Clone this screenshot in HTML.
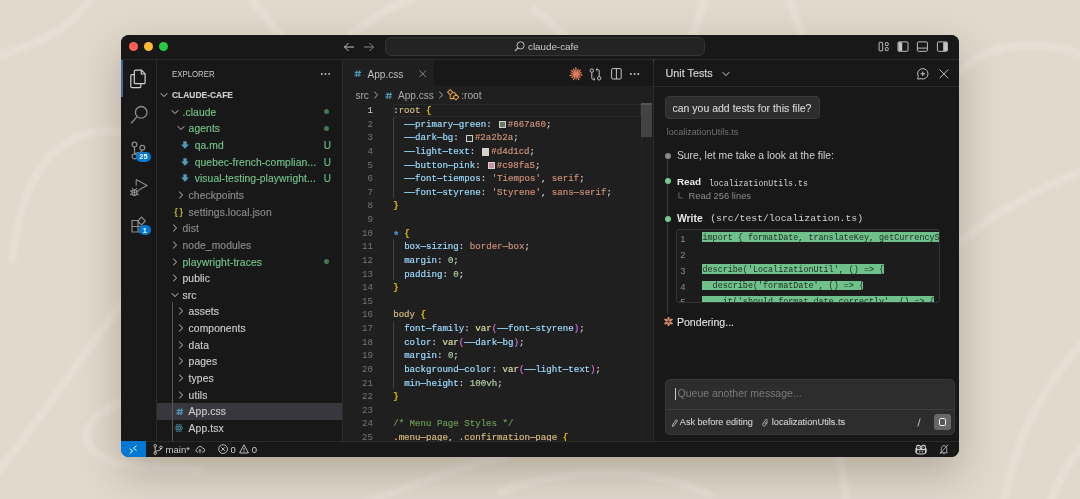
<!DOCTYPE html>
<html><head><meta charset="utf-8">
<style>
*{box-sizing:border-box;margin:0;padding:0}
html,body{width:1080px;height:499px;overflow:hidden}
body{background:#e0d9cc;position:relative;font-family:"Liberation Sans",sans-serif;color:#cccccc}
#win{position:absolute;left:121px;top:34.7px;width:837.8px;height:422.3px;border-radius:8px;background:#181818;overflow:hidden;box-shadow:0 16px 40px rgba(50,35,20,0.26)}
#in{position:absolute;left:-121px;top:-34.7px;width:1080px;height:499px;will-change:transform}
.t{position:absolute;white-space:pre}
.r{position:absolute}
svg{position:absolute;overflow:visible}
</style></head><body>
<svg style="left:0;top:0" width="1080" height="499" viewBox="0 0 1080 499">
<defs><filter id="bl" x="-10%" y="-10%" width="120%" height="120%"><feGaussianBlur stdDeviation="1.6"/></filter></defs>
<g fill="none" stroke="#e6dfd4" stroke-width="8.5" stroke-linecap="round" filter="url(#bl)">
<path d="M-10 58 C 25 48, 70 35, 92 -5"/>
<path d="M12 260 C 20 190, 45 140, 95 132 C 140 126, 200 150, 240 200"/>
<path d="M-5 475 C 40 420, 90 345, 135 285"/>
<path d="M140 398 C 100 405, 72 430, 95 452 C 115 470, 150 466, 200 470"/>
<path d="M250 -5 C 262 15, 275 30, 290 45"/>
<path d="M340 45 C 360 25, 385 8, 420 -5"/>
<path d="M535 10 C 548 20, 560 30, 572 45"/>
<path d="M688 45 C 695 30, 700 15, 706 -5"/>
<path d="M788 -5 C 795 15, 800 30, 806 45"/>
<path d="M962 70 C 975 55, 1000 45, 1030 45 C 1055 45, 1070 50, 1090 58"/>
<path d="M950 250 C 985 220, 1030 190, 1090 168"/>
<path d="M1003 505 C 1015 440, 1045 380, 1090 335"/>
<path d="M1050 505 C 1058 480, 1068 460, 1090 440"/>
<path d="M500 492 C 560 470, 640 462, 710 495"/>
<path d="M838 455 C 842 470, 845 485, 846 505"/>
<path d="M360 505 C 410 485, 460 468, 505 455"/>
</g></svg>
<div id="win"><div id="in"><div class="r" style="left:121px;top:35px;width:838px;height:24px;background:#181818;"></div><div class="r" style="left:128.5px;top:42.0px;width:9.4px;height:9.4px;background:#ff5f57;border-radius:50%"></div><div class="r" style="left:143.70000000000002px;top:42.0px;width:9.4px;height:9.4px;background:#febc2e;border-radius:50%"></div><div class="r" style="left:158.8px;top:42.0px;width:9.4px;height:9.4px;background:#28c840;border-radius:50%"></div><svg style="left:343px;top:42px" width="12" height="10" viewBox="0 0 12 10"><path d="M11 5H1.5M5.5 1L1.5 5l4 4" fill="none" stroke="#cccccc" stroke-width="0.95"/></svg><svg style="left:363px;top:42px" width="12" height="10" viewBox="0 0 12 10"><path d="M1 5h9.5M6.5 1l4 4-4 4" fill="none" stroke="#8a8a8a" stroke-width="0.95"/></svg><div class="r" style="left:385.3px;top:37.3px;width:319.5px;height:18.3px;background:#232323;border:1px solid #353535;border-radius:6px"></div><svg style="left:513.5px;top:41.3px" width="11" height="11" viewBox="0 0 11 11"><circle cx="6.6" cy="4.4" r="3.6" fill="none" stroke="#bdbdbd" stroke-width="1"/><path d="M4 7L0.8 10.2" stroke="#bdbdbd" stroke-width="1.1"/></svg><div class="t" style="left:528px;top:36.8px;height:20px;line-height:20px;font-size:9.8px;color:#cccccc;font-family:'Liberation Sans',sans-serif;font-weight:normal;">claude-cafe</div><svg style="left:878px;top:41px" width="72" height="11" viewBox="0 0 72 11" fill="none" stroke="#c5c5c5" stroke-width="0.95"><rect x="1.1" y="1.3" width="3.6" height="8.6" rx="0.7"/><rect x="7.4" y="1.6" width="2.8" height="3" rx="0.7"/><rect x="7.4" y="6.6" width="2.8" height="3" rx="0.7"/><rect x="20" y="0.9" width="10" height="9.4" rx="1"/><rect x="20.4" y="1.3" width="3.8" height="8.6" fill="#c5c5c5" stroke="none"/><rect x="39.4" y="0.9" width="10" height="9.4" rx="1"/><path d="M39.4 7.1h10"/><rect x="59.4" y="0.9" width="10" height="9.4" rx="1"/><rect x="65.2" y="1.3" width="3.8" height="8.6" fill="#c5c5c5" stroke="none"/></svg><div class="r" style="left:121px;top:59px;width:35px;height:382px;background:#181818;"></div><div class="r" style="left:156px;top:59px;width:1px;height:382px;background:#2b2b2b;"></div><div class="r" style="left:121px;top:60px;width:1.8px;height:37px;background:#3a6c9e;"></div><svg style="left:129px;top:68.5px" width="19" height="20" viewBox="0 0 19 20" fill="none" stroke="#d0d0d0" stroke-width="1.2" stroke-linejoin="round"><path d="M6.5 1.2h6l3.6 3.6v8.6a1.2 1.2 0 0 1-1.2 1.2H6.5a1.2 1.2 0 0 1-1.2-1.2V2.4a1.2 1.2 0 0 1 1.2-1.2z"/><path d="M12.3 1.2v3.8h3.8"/><path d="M5.3 5.6H3a1.2 1.2 0 0 0-1.2 1.2v10.6A1.2 1.2 0 0 0 3 18.6h7.6a1.2 1.2 0 0 0 1.2-1.2v-2.8"/></svg><svg style="left:129.5px;top:104.5px" width="19" height="20" viewBox="0 0 19 20" fill="none" stroke="#8c8c8c" stroke-width="1.3"><circle cx="11.2" cy="7.3" r="5.8"/><path d="M7.1 11.6L1.2 18.3"/></svg><svg style="left:130px;top:141px" width="16" height="19" viewBox="0 0 16 19" fill="none" stroke="#8c8c8c" stroke-width="1.2"><circle cx="4.5" cy="3.6" r="2.4"/><circle cx="12.3" cy="6.8" r="2.4"/><circle cx="4.5" cy="15.4" r="2.4"/><path d="M4.5 6v7M12.3 9.2c0 3-7.8 2.4-7.8 4"/></svg><div class="r" style="left:136.2px;top:151.8px;width:14.6px;height:10.2px;background:#0078d4;border-radius:5.1px"></div><div class="t" style="left:136.2px;top:147.2px;height:20px;line-height:20px;font-size:7.4px;color:#ffffff;font-family:'Liberation Sans',sans-serif;font-weight:bold;width:14.6px;text-align:center">25</div><svg style="left:128.5px;top:178px" width="20" height="20" viewBox="0 0 20 20" fill="none" stroke="#8c8c8c" stroke-width="1.15"><path d="M7.2 1.5v6M7.2 1.5L18 7.5 9.8 12"/><ellipse cx="5.4" cy="14.6" rx="2.5" ry="3"/><path d="M2.9 14.2h5M5.4 11.6v6M1 12.6l1.9 0.8M1 16.8l1.9-0.8M9.8 12.6l-1.9 0.8M9.8 16.8l-1.9-0.8M3.8 11.2l-0.9-1.2M7 11.2l0.9-1.2"/></svg><svg style="left:130.5px;top:216px" width="18" height="17" viewBox="0 0 18 17" fill="none" stroke="#8c8c8c" stroke-width="1.2"><path d="M1 4.5h6v6h6v5.5H1zM1 10.5h6v5.5M7 10.5V4.5"/><path d="M10.5 1.2l3.8 3.8-3.8 3.8-3.8-3.8z"/></svg><div class="r" style="left:139.2px;top:225.2px;width:11.4px;height:10.2px;background:#0078d4;border-radius:5.1px"></div><div class="t" style="left:139.2px;top:220.6px;height:20px;line-height:20px;font-size:7.4px;color:#ffffff;font-family:'Liberation Sans',sans-serif;font-weight:bold;width:11.4px;text-align:center">1</div><div class="r" style="left:157px;top:59px;width:185px;height:382px;background:#181818;"></div><div class="r" style="left:342px;top:59px;width:1px;height:382px;background:#2b2b2b;"></div><div class="t" style="left:172px;top:63.900000000000006px;height:20px;line-height:20px;font-size:8.9px;color:#c8c8c8;font-family:'Liberation Sans',sans-serif;font-weight:normal;transform:scaleX(0.88);transform-origin:0 0">EXPLORER</div><svg style="left:320px;top:71.5px" width="12" height="4" viewBox="0 0 12 4" fill="#cccccc"><circle cx="1.8" cy="1.9" r="0.95"/><circle cx="5.5" cy="1.9" r="0.95"/><circle cx="9.2" cy="1.9" r="0.95"/></svg><div class="r" style="left:157px;top:403.04999999999995px;width:185px;height:16.65px;background:#37373d;"></div><div class="r" style="left:172.3px;top:302.15px;width:1px;height:138.85000000000002px;background:#585858;"></div><svg style="left:160.4px;top:92.025px" width="8" height="6" viewBox="0 0 8 6"><path d="M0.7 1.2L4 4.6 7.3 1.2" fill="none" stroke="#c5c5c5" stroke-width="1"/></svg><div class="t" style="left:172px;top:85.325px;height:20px;line-height:20px;font-size:8.45px;color:#cccccc;font-family:'Liberation Sans',sans-serif;font-weight:bold;-webkit-text-stroke:0.15px #cccccc;letter-spacing:0px">CLAUDE-CAFE</div><svg style="left:170.9px;top:108.675px" width="8" height="6" viewBox="0 0 8 6"><path d="M0.7 1.2L4 4.6 7.3 1.2" fill="none" stroke="#c5c5c5" stroke-width="1"/></svg><div class="t" style="left:182.5px;top:102.675px;height:20px;line-height:20px;font-size:10.3px;color:#74c28a;font-family:'Liberation Sans',sans-serif;font-weight:normal;-webkit-text-stroke:0.15px #74c28a;letter-spacing:0.1px">.claude</div><div class="r" style="left:323.8px;top:109.27499999999999px;width:5px;height:5px;background:#477552;border-radius:50%"></div><svg style="left:177.0px;top:125.32499999999999px" width="8" height="6" viewBox="0 0 8 6"><path d="M0.7 1.2L4 4.6 7.3 1.2" fill="none" stroke="#c5c5c5" stroke-width="1"/></svg><div class="t" style="left:188.6px;top:119.32499999999999px;height:20px;line-height:20px;font-size:10.3px;color:#74c28a;font-family:'Liberation Sans',sans-serif;font-weight:normal;-webkit-text-stroke:0.15px #74c28a;letter-spacing:0.1px">agents</div><div class="r" style="left:323.8px;top:125.92499999999998px;width:5px;height:5px;background:#477552;border-radius:50%"></div><svg style="left:181.39999999999998px;top:140.975px" width="8" height="8" viewBox="0 0 8 8"><path d="M2.3 0.3h3.4v3.2H8L4 7.8 0 3.5h2.3z" fill="#519aba"/></svg><div class="t" style="left:194.7px;top:135.975px;height:20px;line-height:20px;font-size:10.3px;color:#74c28a;font-family:'Liberation Sans',sans-serif;font-weight:normal;-webkit-text-stroke:0.15px #74c28a;letter-spacing:0.1px">qa.md</div><div class="t" style="left:323.7px;top:135.975px;height:20px;line-height:20px;font-size:10px;color:#74c28a;font-family:'Liberation Sans',sans-serif;font-weight:normal;-webkit-text-stroke:0.1px #74c28a">U</div><svg style="left:181.39999999999998px;top:157.625px" width="8" height="8" viewBox="0 0 8 8"><path d="M2.3 0.3h3.4v3.2H8L4 7.8 0 3.5h2.3z" fill="#519aba"/></svg><div class="t" style="left:194.7px;top:152.625px;height:20px;line-height:20px;font-size:10.3px;color:#74c28a;font-family:'Liberation Sans',sans-serif;font-weight:normal;-webkit-text-stroke:0.15px #74c28a;letter-spacing:0.1px">quebec-french-complian...</div><div class="t" style="left:323.7px;top:152.625px;height:20px;line-height:20px;font-size:10px;color:#74c28a;font-family:'Liberation Sans',sans-serif;font-weight:normal;-webkit-text-stroke:0.1px #74c28a">U</div><svg style="left:181.39999999999998px;top:174.27499999999998px" width="8" height="8" viewBox="0 0 8 8"><path d="M2.3 0.3h3.4v3.2H8L4 7.8 0 3.5h2.3z" fill="#519aba"/></svg><div class="t" style="left:194.7px;top:169.27499999999998px;height:20px;line-height:20px;font-size:10.3px;color:#74c28a;font-family:'Liberation Sans',sans-serif;font-weight:normal;-webkit-text-stroke:0.15px #74c28a;letter-spacing:0.1px">visual-testing-playwright...</div><div class="t" style="left:323.7px;top:169.27499999999998px;height:20px;line-height:20px;font-size:10px;color:#74c28a;font-family:'Liberation Sans',sans-serif;font-weight:normal;-webkit-text-stroke:0.1px #74c28a">U</div><svg style="left:178.2px;top:190.92499999999998px" width="6" height="8" viewBox="0 0 6 8"><path d="M1.2 0.7L4.6 4 1.2 7.3" fill="none" stroke="#c5c5c5" stroke-width="1"/></svg><div class="t" style="left:188.6px;top:185.92499999999998px;height:20px;line-height:20px;font-size:10.3px;color:#8c8c8c;font-family:'Liberation Sans',sans-serif;font-weight:normal;-webkit-text-stroke:0.15px #8c8c8c;letter-spacing:0.1px">checkpoints</div><div class="t" style="left:174.4px;top:202.17499999999998px;height:20px;line-height:20px;font-size:9.2px;font-weight:normal;color:#cbcb41;font-family:'Liberation Sans',sans-serif;letter-spacing:2.2px;-webkit-text-stroke:0.2px #cbcb41">{}</div><div class="t" style="left:188.6px;top:202.575px;height:20px;line-height:20px;font-size:10.3px;color:#8c8c8c;font-family:'Liberation Sans',sans-serif;font-weight:normal;-webkit-text-stroke:0.15px #8c8c8c;letter-spacing:0.1px">settings.local.json</div><svg style="left:172.1px;top:224.22499999999997px" width="6" height="8" viewBox="0 0 6 8"><path d="M1.2 0.7L4.6 4 1.2 7.3" fill="none" stroke="#c5c5c5" stroke-width="1"/></svg><div class="t" style="left:182.5px;top:219.22499999999997px;height:20px;line-height:20px;font-size:10.3px;color:#8c8c8c;font-family:'Liberation Sans',sans-serif;font-weight:normal;-webkit-text-stroke:0.15px #8c8c8c;letter-spacing:0.1px">dist</div><svg style="left:172.1px;top:240.875px" width="6" height="8" viewBox="0 0 6 8"><path d="M1.2 0.7L4.6 4 1.2 7.3" fill="none" stroke="#c5c5c5" stroke-width="1"/></svg><div class="t" style="left:182.5px;top:235.875px;height:20px;line-height:20px;font-size:10.3px;color:#8c8c8c;font-family:'Liberation Sans',sans-serif;font-weight:normal;-webkit-text-stroke:0.15px #8c8c8c;letter-spacing:0.1px">node_modules</div><svg style="left:172.1px;top:257.525px" width="6" height="8" viewBox="0 0 6 8"><path d="M1.2 0.7L4.6 4 1.2 7.3" fill="none" stroke="#c5c5c5" stroke-width="1"/></svg><div class="t" style="left:182.5px;top:252.52499999999998px;height:20px;line-height:20px;font-size:10.3px;color:#74c28a;font-family:'Liberation Sans',sans-serif;font-weight:normal;-webkit-text-stroke:0.15px #74c28a;letter-spacing:0.1px">playwright-traces</div><div class="r" style="left:323.8px;top:259.125px;width:5px;height:5px;background:#477552;border-radius:50%"></div><svg style="left:172.1px;top:274.17499999999995px" width="6" height="8" viewBox="0 0 6 8"><path d="M1.2 0.7L4.6 4 1.2 7.3" fill="none" stroke="#c5c5c5" stroke-width="1"/></svg><div class="t" style="left:182.5px;top:269.17499999999995px;height:20px;line-height:20px;font-size:10.3px;color:#cccccc;font-family:'Liberation Sans',sans-serif;font-weight:normal;-webkit-text-stroke:0.15px #cccccc;letter-spacing:0.1px">public</div><svg style="left:170.9px;top:291.825px" width="8" height="6" viewBox="0 0 8 6"><path d="M0.7 1.2L4 4.6 7.3 1.2" fill="none" stroke="#c5c5c5" stroke-width="1"/></svg><div class="t" style="left:182.5px;top:285.825px;height:20px;line-height:20px;font-size:10.3px;color:#cccccc;font-family:'Liberation Sans',sans-serif;font-weight:normal;-webkit-text-stroke:0.15px #cccccc;letter-spacing:0.1px">src</div><svg style="left:178.2px;top:307.47499999999997px" width="6" height="8" viewBox="0 0 6 8"><path d="M1.2 0.7L4.6 4 1.2 7.3" fill="none" stroke="#c5c5c5" stroke-width="1"/></svg><div class="t" style="left:188.6px;top:302.47499999999997px;height:20px;line-height:20px;font-size:10.3px;color:#cccccc;font-family:'Liberation Sans',sans-serif;font-weight:normal;-webkit-text-stroke:0.15px #cccccc;letter-spacing:0.1px">assets</div><svg style="left:178.2px;top:324.12499999999994px" width="6" height="8" viewBox="0 0 6 8"><path d="M1.2 0.7L4.6 4 1.2 7.3" fill="none" stroke="#c5c5c5" stroke-width="1"/></svg><div class="t" style="left:188.6px;top:319.12499999999994px;height:20px;line-height:20px;font-size:10.3px;color:#cccccc;font-family:'Liberation Sans',sans-serif;font-weight:normal;-webkit-text-stroke:0.15px #cccccc;letter-spacing:0.1px">components</div><svg style="left:178.2px;top:340.775px" width="6" height="8" viewBox="0 0 6 8"><path d="M1.2 0.7L4.6 4 1.2 7.3" fill="none" stroke="#c5c5c5" stroke-width="1"/></svg><div class="t" style="left:188.6px;top:335.775px;height:20px;line-height:20px;font-size:10.3px;color:#cccccc;font-family:'Liberation Sans',sans-serif;font-weight:normal;-webkit-text-stroke:0.15px #cccccc;letter-spacing:0.1px">data</div><svg style="left:178.2px;top:357.42499999999995px" width="6" height="8" viewBox="0 0 6 8"><path d="M1.2 0.7L4.6 4 1.2 7.3" fill="none" stroke="#c5c5c5" stroke-width="1"/></svg><div class="t" style="left:188.6px;top:352.42499999999995px;height:20px;line-height:20px;font-size:10.3px;color:#cccccc;font-family:'Liberation Sans',sans-serif;font-weight:normal;-webkit-text-stroke:0.15px #cccccc;letter-spacing:0.1px">pages</div><svg style="left:178.2px;top:374.07499999999993px" width="6" height="8" viewBox="0 0 6 8"><path d="M1.2 0.7L4.6 4 1.2 7.3" fill="none" stroke="#c5c5c5" stroke-width="1"/></svg><div class="t" style="left:188.6px;top:369.07499999999993px;height:20px;line-height:20px;font-size:10.3px;color:#cccccc;font-family:'Liberation Sans',sans-serif;font-weight:normal;-webkit-text-stroke:0.15px #cccccc;letter-spacing:0.1px">types</div><svg style="left:178.2px;top:390.72499999999997px" width="6" height="8" viewBox="0 0 6 8"><path d="M1.2 0.7L4.6 4 1.2 7.3" fill="none" stroke="#c5c5c5" stroke-width="1"/></svg><div class="t" style="left:188.6px;top:385.72499999999997px;height:20px;line-height:20px;font-size:10.3px;color:#cccccc;font-family:'Liberation Sans',sans-serif;font-weight:normal;-webkit-text-stroke:0.15px #cccccc;letter-spacing:0.1px">utils</div><svg style="left:175.6px;top:407.57499999999993px" width="7.5" height="7.5" viewBox="0 0 15 15" fill="none" stroke="#519aba" stroke-width="2.3"><path d="M6 1L4.2 14M11.4 1L9.6 14M1.2 4.8h13M0.6 10.2h13"/></svg><div class="t" style="left:188.6px;top:402.37499999999994px;height:20px;line-height:20px;font-size:10.3px;color:#cccccc;font-family:'Liberation Sans',sans-serif;font-weight:normal;-webkit-text-stroke:0.15px #cccccc;letter-spacing:0.1px">App.css</div><svg style="left:174.4px;top:424.025px" width="9.6" height="8" viewBox="0 0 20 17" fill="none" stroke="#4f93ad" stroke-width="1.25"><ellipse cx="10" cy="8.5" rx="9" ry="3.4"/><ellipse cx="10" cy="8.5" rx="9" ry="3.4" transform="rotate(60 10 8.5)"/><ellipse cx="10" cy="8.5" rx="9" ry="3.4" transform="rotate(120 10 8.5)"/><circle cx="10" cy="8.5" r="1.6" fill="#4f93ad" stroke="none"/></svg><div class="t" style="left:188.6px;top:419.025px;height:20px;line-height:20px;font-size:10.3px;color:#cccccc;font-family:'Liberation Sans',sans-serif;font-weight:normal;-webkit-text-stroke:0.15px #cccccc;letter-spacing:0.1px">App.tsx</div><div class="r" style="left:343px;top:59px;width:310px;height:27px;background:#181818;"></div><div class="r" style="left:343px;top:85.5px;width:310px;height:0.5px;background:#2b2b2b;"></div><div class="r" style="left:343px;top:59px;width:90.5px;height:27px;background:#1f1f1f;"></div><div class="r" style="left:343px;top:86px;width:310px;height:355px;background:#1f1f1f;"></div><svg style="left:354.2px;top:69.8px" width="7.4" height="7.4" viewBox="0 0 15 15" fill="none" stroke="#519aba" stroke-width="2.2"><path d="M6 1L4.2 14M11.4 1L9.6 14M1.2 4.8h13M0.6 10.2h13"/></svg><div class="t" style="left:367.5px;top:64.6px;height:20px;line-height:20px;font-size:10.06px;color:#bdbdbd;font-family:'Liberation Sans',sans-serif;font-weight:normal;">App.css</div><svg style="left:418.8px;top:69.8px" width="7.5" height="7.5" viewBox="0 0 8 8"><path d="M0.5 0.5l7 7M7.5 0.5L0.5 7.5" stroke="#9a9a9a" stroke-width="0.9"/></svg><svg style="left:569px;top:66.5px" width="14" height="14" viewBox="0 0 14 14" stroke="#e27d5b" stroke-width="1.25" stroke-linecap="round"><path d="M7 7L12.88 8.19"/><path d="M7 7L11.14 10.14"/><path d="M7 7L9.87 12.61"/><path d="M7 7L7.12 12.00"/><path d="M7 7L4.49 12.56"/><path d="M7 7L2.86 10.47"/><path d="M7 7L0.99 8.53"/><path d="M7 7L2.00 5.99"/><path d="M7 7L2.30 3.44"/><path d="M7 7L4.49 2.10"/><path d="M7 7L6.85 0.70"/><path d="M7 7L9.06 2.44"/><path d="M7 7L11.45 3.27"/><path d="M7 7L12.14 5.69"/><circle cx="7" cy="7" r="2.2" fill="#e27d5b" stroke="none"/></svg><svg style="left:589px;top:67.5px" width="13" height="13" viewBox="0 0 13 13" fill="none" stroke="#c5c5c5" stroke-width="1"><circle cx="2.8" cy="2.6" r="1.7"/><path d="M2.8 4.3v5.6c0 1 0.5 1.4 1.4 1.4h1.6M4.6 10L6 11.3 4.6 12.6"/><circle cx="10.2" cy="10.3" r="1.7"/><path d="M10.2 8.6V3c0-1-0.5-1.4-1.4-1.4H7.2M8.4 0.3L7 1.6 8.4 2.9"/></svg><svg style="left:610.5px;top:67.5px" width="11" height="12" viewBox="0 0 11 12" fill="none" stroke="#c5c5c5" stroke-width="1"><rect x="0.6" y="0.6" width="9.6" height="10.4" rx="1.2"/><path d="M5.4 0.6v10.4"/></svg><svg style="left:629px;top:72px" width="12" height="4" viewBox="0 0 12 4" fill="#c5c5c5"><circle cx="1.9" cy="1.9" r="1"/><circle cx="5.6" cy="1.9" r="1"/><circle cx="9.3" cy="1.9" r="1"/></svg><div class="t" style="left:355.4px;top:85.6px;height:20px;line-height:20px;font-size:10.1px;color:#a9a9a9;font-family:'Liberation Sans',sans-serif;font-weight:normal;">src</div><svg style="left:372.5px;top:91.3px" width="6" height="8" viewBox="0 0 6 8"><path d="M1.2 0.7L4.6 4 1.2 7.3" fill="none" stroke="#a9a9a9" stroke-width="1"/></svg><svg style="left:385px;top:91.5px" width="7.4" height="7.4" viewBox="0 0 15 15" fill="none" stroke="#519aba" stroke-width="2.2"><path d="M6 1L4.2 14M11.4 1L9.6 14M1.2 4.8h13M0.6 10.2h13"/></svg><div class="t" style="left:398px;top:85.6px;height:20px;line-height:20px;font-size:10.06px;color:#a9a9a9;font-family:'Liberation Sans',sans-serif;font-weight:normal;">App.css</div><svg style="left:438.2px;top:91.3px" width="6" height="8" viewBox="0 0 6 8"><path d="M1.2 0.7L4.6 4 1.2 7.3" fill="none" stroke="#a9a9a9" stroke-width="1"/></svg><svg style="left:446px;top:88px" width="14" height="14" viewBox="0 0 14 14" fill="none" stroke="#e0a03a" stroke-width="1.05" stroke-linejoin="round"><path d="M1.6 4.2L4.2 1.6 6.8 4.2 4.2 6.8z"/><path d="M7.2 9.2L10 6.4 12.8 9.2 10 12z"/><path d="M4.2 6.8v3.8h3.8M6.8 4.2c1.5 0 2.4 0.6 3.2 2.2"/></svg><div class="t" style="left:461.2px;top:85.6px;height:20px;line-height:20px;font-size:10.2px;color:#a9a9a9;font-family:'Liberation Sans',sans-serif;font-weight:normal;">:root</div><div class="r" style="left:393px;top:103.69999999999999px;width:248px;height:13.62px;background:transparent;border:1px solid #2a2a2a"></div><div class="r" style="left:393.2px;top:116.72px;width:1px;height:81.72px;background:#404040;"></div><div class="r" style="left:393.2px;top:239.29999999999998px;width:1px;height:40.86px;background:#404040;"></div><div class="r" style="left:393.2px;top:321.02px;width:1px;height:68.1px;background:#404040;"></div><div class="t" style="left:343px;top:101.11px;height:20px;line-height:20px;font-size:9.12px;color:#cccccc;font-family:'Liberation Mono',monospace;font-weight:normal;width:30px;text-align:right">1</div><div class="t" style="left:393.2px;top:101.11px;height:20px;line-height:20px;font-size:9.12px;color:#cccccc;font-family:'Liberation Mono',monospace;font-weight:normal;-webkit-text-stroke:0.18px #cccccc">:</div><div class="t" style="left:398.67px;top:101.11px;height:20px;line-height:20px;font-size:9.12px;color:#d7ba7d;font-family:'Liberation Mono',monospace;font-weight:normal;-webkit-text-stroke:0.18px #d7ba7d">root</div><div class="t" style="left:426.02px;top:101.11px;height:20px;line-height:20px;font-size:9.12px;color:#ffd700;font-family:'Liberation Mono',monospace;font-weight:normal;-webkit-text-stroke:0.18px #ffd700">{</div><div class="t" style="left:343px;top:114.73px;height:20px;line-height:20px;font-size:9.12px;color:#6e7681;font-family:'Liberation Mono',monospace;font-weight:normal;width:30px;text-align:right">2</div><div class="t" style="left:404.14px;top:114.73px;height:20px;line-height:20px;font-size:9.12px;color:#9cdcfe;font-family:'Liberation Mono',monospace;font-weight:normal;-webkit-text-stroke:0.18px #9cdcfe">——primary—green</div><div class="t" style="left:486.19px;top:114.73px;height:20px;line-height:20px;font-size:9.12px;color:#cccccc;font-family:'Liberation Mono',monospace;font-weight:normal;-webkit-text-stroke:0.18px #cccccc">: </div><div class="r" style="left:498.53px;top:121.13000000000001px;width:7.3px;height:7.3px;background:#667a60;border:1px solid #d0d0d0"></div><div class="t" style="left:507.73px;top:114.73px;height:20px;line-height:20px;font-size:9.12px;color:#ce9178;font-family:'Liberation Mono',monospace;font-weight:normal;-webkit-text-stroke:0.18px #ce9178">#667a60</div><div class="t" style="left:546.02px;top:114.73px;height:20px;line-height:20px;font-size:9.12px;color:#cccccc;font-family:'Liberation Mono',monospace;font-weight:normal;-webkit-text-stroke:0.18px #cccccc">;</div><div class="t" style="left:343px;top:128.35px;height:20px;line-height:20px;font-size:9.12px;color:#6e7681;font-family:'Liberation Mono',monospace;font-weight:normal;width:30px;text-align:right">3</div><div class="t" style="left:404.14px;top:128.35px;height:20px;line-height:20px;font-size:9.12px;color:#9cdcfe;font-family:'Liberation Mono',monospace;font-weight:normal;-webkit-text-stroke:0.18px #9cdcfe">——dark—bg</div><div class="t" style="left:453.37px;top:128.35px;height:20px;line-height:20px;font-size:9.12px;color:#cccccc;font-family:'Liberation Mono',monospace;font-weight:normal;-webkit-text-stroke:0.18px #cccccc">: </div><div class="r" style="left:465.71px;top:134.75px;width:7.3px;height:7.3px;background:#2a2b2a;border:1px solid #d0d0d0"></div><div class="t" style="left:474.91px;top:128.35px;height:20px;line-height:20px;font-size:9.12px;color:#ce9178;font-family:'Liberation Mono',monospace;font-weight:normal;-webkit-text-stroke:0.18px #ce9178">#2a2b2a</div><div class="t" style="left:513.2px;top:128.35px;height:20px;line-height:20px;font-size:9.12px;color:#cccccc;font-family:'Liberation Mono',monospace;font-weight:normal;-webkit-text-stroke:0.18px #cccccc">;</div><div class="t" style="left:343px;top:141.96999999999997px;height:20px;line-height:20px;font-size:9.12px;color:#6e7681;font-family:'Liberation Mono',monospace;font-weight:normal;width:30px;text-align:right">4</div><div class="t" style="left:404.14px;top:141.96999999999997px;height:20px;line-height:20px;font-size:9.12px;color:#9cdcfe;font-family:'Liberation Mono',monospace;font-weight:normal;-webkit-text-stroke:0.18px #9cdcfe">——light—text</div><div class="t" style="left:469.78px;top:141.96999999999997px;height:20px;line-height:20px;font-size:9.12px;color:#cccccc;font-family:'Liberation Mono',monospace;font-weight:normal;-webkit-text-stroke:0.18px #cccccc">: </div><div class="r" style="left:482.11999999999995px;top:148.36999999999998px;width:7.3px;height:7.3px;background:#d4d1cd;border:1px solid #d0d0d0"></div><div class="t" style="left:491.32px;top:141.96999999999997px;height:20px;line-height:20px;font-size:9.12px;color:#ce9178;font-family:'Liberation Mono',monospace;font-weight:normal;-webkit-text-stroke:0.18px #ce9178">#d4d1cd</div><div class="t" style="left:529.61px;top:141.96999999999997px;height:20px;line-height:20px;font-size:9.12px;color:#cccccc;font-family:'Liberation Mono',monospace;font-weight:normal;-webkit-text-stroke:0.18px #cccccc">;</div><div class="t" style="left:343px;top:155.58999999999997px;height:20px;line-height:20px;font-size:9.12px;color:#6e7681;font-family:'Liberation Mono',monospace;font-weight:normal;width:30px;text-align:right">5</div><div class="t" style="left:404.14px;top:155.58999999999997px;height:20px;line-height:20px;font-size:9.12px;color:#9cdcfe;font-family:'Liberation Mono',monospace;font-weight:normal;-webkit-text-stroke:0.18px #9cdcfe">——button—pink</div><div class="t" style="left:475.25px;top:155.58999999999997px;height:20px;line-height:20px;font-size:9.12px;color:#cccccc;font-family:'Liberation Mono',monospace;font-weight:normal;-webkit-text-stroke:0.18px #cccccc">: </div><div class="r" style="left:487.59px;top:161.98999999999998px;width:7.3px;height:7.3px;background:#c98fa5;border:1px solid #d0d0d0"></div><div class="t" style="left:496.79px;top:155.58999999999997px;height:20px;line-height:20px;font-size:9.12px;color:#ce9178;font-family:'Liberation Mono',monospace;font-weight:normal;-webkit-text-stroke:0.18px #ce9178">#c98fa5</div><div class="t" style="left:535.08px;top:155.58999999999997px;height:20px;line-height:20px;font-size:9.12px;color:#cccccc;font-family:'Liberation Mono',monospace;font-weight:normal;-webkit-text-stroke:0.18px #cccccc">;</div><div class="t" style="left:343px;top:169.20999999999998px;height:20px;line-height:20px;font-size:9.12px;color:#6e7681;font-family:'Liberation Mono',monospace;font-weight:normal;width:30px;text-align:right">6</div><div class="t" style="left:404.14px;top:169.20999999999998px;height:20px;line-height:20px;font-size:9.12px;color:#9cdcfe;font-family:'Liberation Mono',monospace;font-weight:normal;-webkit-text-stroke:0.18px #9cdcfe">——font—tiempos</div><div class="t" style="left:480.72px;top:169.20999999999998px;height:20px;line-height:20px;font-size:9.12px;color:#cccccc;font-family:'Liberation Mono',monospace;font-weight:normal;-webkit-text-stroke:0.18px #cccccc">: </div><div class="t" style="left:491.66px;top:169.20999999999998px;height:20px;line-height:20px;font-size:9.12px;color:#ce9178;font-family:'Liberation Mono',monospace;font-weight:normal;-webkit-text-stroke:0.18px #ce9178">&#x27;Tiempos&#x27;</div><div class="t" style="left:540.89px;top:169.20999999999998px;height:20px;line-height:20px;font-size:9.12px;color:#cccccc;font-family:'Liberation Mono',monospace;font-weight:normal;-webkit-text-stroke:0.18px #cccccc">, </div><div class="t" style="left:551.83px;top:169.20999999999998px;height:20px;line-height:20px;font-size:9.12px;color:#ce9178;font-family:'Liberation Mono',monospace;font-weight:normal;-webkit-text-stroke:0.18px #ce9178">serif</div><div class="t" style="left:579.18px;top:169.20999999999998px;height:20px;line-height:20px;font-size:9.12px;color:#cccccc;font-family:'Liberation Mono',monospace;font-weight:normal;-webkit-text-stroke:0.18px #cccccc">;</div><div class="t" style="left:343px;top:182.82999999999998px;height:20px;line-height:20px;font-size:9.12px;color:#6e7681;font-family:'Liberation Mono',monospace;font-weight:normal;width:30px;text-align:right">7</div><div class="t" style="left:404.14px;top:182.82999999999998px;height:20px;line-height:20px;font-size:9.12px;color:#9cdcfe;font-family:'Liberation Mono',monospace;font-weight:normal;-webkit-text-stroke:0.18px #9cdcfe">——font—styrene</div><div class="t" style="left:480.72px;top:182.82999999999998px;height:20px;line-height:20px;font-size:9.12px;color:#cccccc;font-family:'Liberation Mono',monospace;font-weight:normal;-webkit-text-stroke:0.18px #cccccc">: </div><div class="t" style="left:491.66px;top:182.82999999999998px;height:20px;line-height:20px;font-size:9.12px;color:#ce9178;font-family:'Liberation Mono',monospace;font-weight:normal;-webkit-text-stroke:0.18px #ce9178">&#x27;Styrene&#x27;</div><div class="t" style="left:540.89px;top:182.82999999999998px;height:20px;line-height:20px;font-size:9.12px;color:#cccccc;font-family:'Liberation Mono',monospace;font-weight:normal;-webkit-text-stroke:0.18px #cccccc">, </div><div class="t" style="left:551.83px;top:182.82999999999998px;height:20px;line-height:20px;font-size:9.12px;color:#ce9178;font-family:'Liberation Mono',monospace;font-weight:normal;-webkit-text-stroke:0.18px #ce9178">sans—serif</div><div class="t" style="left:606.53px;top:182.82999999999998px;height:20px;line-height:20px;font-size:9.12px;color:#cccccc;font-family:'Liberation Mono',monospace;font-weight:normal;-webkit-text-stroke:0.18px #cccccc">;</div><div class="t" style="left:343px;top:196.45px;height:20px;line-height:20px;font-size:9.12px;color:#6e7681;font-family:'Liberation Mono',monospace;font-weight:normal;width:30px;text-align:right">8</div><div class="t" style="left:393.2px;top:196.45px;height:20px;line-height:20px;font-size:9.12px;color:#ffd700;font-family:'Liberation Mono',monospace;font-weight:normal;-webkit-text-stroke:0.18px #ffd700">}</div><div class="t" style="left:343px;top:210.07px;height:20px;line-height:20px;font-size:9.12px;color:#6e7681;font-family:'Liberation Mono',monospace;font-weight:normal;width:30px;text-align:right">9</div><div class="t" style="left:343px;top:223.69px;height:20px;line-height:20px;font-size:9.12px;color:#6e7681;font-family:'Liberation Mono',monospace;font-weight:normal;width:30px;text-align:right">10</div><div class="t" style="left:392.8px;top:225.89px;height:20px;line-height:20px;font-size:11.5px;color:#569cd6;font-family:'Liberation Mono',monospace;font-weight:bold;">*</div><div class="t" style="left:404.14px;top:223.69px;height:20px;line-height:20px;font-size:9.12px;color:#ffd700;font-family:'Liberation Mono',monospace;font-weight:normal;-webkit-text-stroke:0.18px #ffd700">{</div><div class="t" style="left:343px;top:237.30999999999997px;height:20px;line-height:20px;font-size:9.12px;color:#6e7681;font-family:'Liberation Mono',monospace;font-weight:normal;width:30px;text-align:right">11</div><div class="t" style="left:404.14px;top:237.30999999999997px;height:20px;line-height:20px;font-size:9.12px;color:#9cdcfe;font-family:'Liberation Mono',monospace;font-weight:normal;-webkit-text-stroke:0.18px #9cdcfe">box—sizing</div><div class="t" style="left:458.84px;top:237.30999999999997px;height:20px;line-height:20px;font-size:9.12px;color:#cccccc;font-family:'Liberation Mono',monospace;font-weight:normal;-webkit-text-stroke:0.18px #cccccc">: </div><div class="t" style="left:469.78px;top:237.30999999999997px;height:20px;line-height:20px;font-size:9.12px;color:#ce9178;font-family:'Liberation Mono',monospace;font-weight:normal;-webkit-text-stroke:0.18px #ce9178">border—box</div><div class="t" style="left:524.48px;top:237.30999999999997px;height:20px;line-height:20px;font-size:9.12px;color:#cccccc;font-family:'Liberation Mono',monospace;font-weight:normal;-webkit-text-stroke:0.18px #cccccc">;</div><div class="t" style="left:343px;top:250.92999999999995px;height:20px;line-height:20px;font-size:9.12px;color:#6e7681;font-family:'Liberation Mono',monospace;font-weight:normal;width:30px;text-align:right">12</div><div class="t" style="left:404.14px;top:250.92999999999995px;height:20px;line-height:20px;font-size:9.12px;color:#9cdcfe;font-family:'Liberation Mono',monospace;font-weight:normal;-webkit-text-stroke:0.18px #9cdcfe">margin</div><div class="t" style="left:436.96px;top:250.92999999999995px;height:20px;line-height:20px;font-size:9.12px;color:#cccccc;font-family:'Liberation Mono',monospace;font-weight:normal;-webkit-text-stroke:0.18px #cccccc">: </div><div class="t" style="left:447.9px;top:250.92999999999995px;height:20px;line-height:20px;font-size:9.12px;color:#b5cea8;font-family:'Liberation Mono',monospace;font-weight:normal;-webkit-text-stroke:0.18px #b5cea8">0</div><div class="t" style="left:453.37px;top:250.92999999999995px;height:20px;line-height:20px;font-size:9.12px;color:#cccccc;font-family:'Liberation Mono',monospace;font-weight:normal;-webkit-text-stroke:0.18px #cccccc">;</div><div class="t" style="left:343px;top:264.54999999999995px;height:20px;line-height:20px;font-size:9.12px;color:#6e7681;font-family:'Liberation Mono',monospace;font-weight:normal;width:30px;text-align:right">13</div><div class="t" style="left:404.14px;top:264.54999999999995px;height:20px;line-height:20px;font-size:9.12px;color:#9cdcfe;font-family:'Liberation Mono',monospace;font-weight:normal;-webkit-text-stroke:0.18px #9cdcfe">padding</div><div class="t" style="left:442.43px;top:264.54999999999995px;height:20px;line-height:20px;font-size:9.12px;color:#cccccc;font-family:'Liberation Mono',monospace;font-weight:normal;-webkit-text-stroke:0.18px #cccccc">: </div><div class="t" style="left:453.37px;top:264.54999999999995px;height:20px;line-height:20px;font-size:9.12px;color:#b5cea8;font-family:'Liberation Mono',monospace;font-weight:normal;-webkit-text-stroke:0.18px #b5cea8">0</div><div class="t" style="left:458.84px;top:264.54999999999995px;height:20px;line-height:20px;font-size:9.12px;color:#cccccc;font-family:'Liberation Mono',monospace;font-weight:normal;-webkit-text-stroke:0.18px #cccccc">;</div><div class="t" style="left:343px;top:278.16999999999996px;height:20px;line-height:20px;font-size:9.12px;color:#6e7681;font-family:'Liberation Mono',monospace;font-weight:normal;width:30px;text-align:right">14</div><div class="t" style="left:393.2px;top:278.16999999999996px;height:20px;line-height:20px;font-size:9.12px;color:#ffd700;font-family:'Liberation Mono',monospace;font-weight:normal;-webkit-text-stroke:0.18px #ffd700">}</div><div class="t" style="left:343px;top:291.78999999999996px;height:20px;line-height:20px;font-size:9.12px;color:#6e7681;font-family:'Liberation Mono',monospace;font-weight:normal;width:30px;text-align:right">15</div><div class="t" style="left:343px;top:305.40999999999997px;height:20px;line-height:20px;font-size:9.12px;color:#6e7681;font-family:'Liberation Mono',monospace;font-weight:normal;width:30px;text-align:right">16</div><div class="t" style="left:393.2px;top:305.40999999999997px;height:20px;line-height:20px;font-size:9.12px;color:#d7ba7d;font-family:'Liberation Mono',monospace;font-weight:normal;-webkit-text-stroke:0.18px #d7ba7d">body</div><div class="t" style="left:420.55px;top:305.40999999999997px;height:20px;line-height:20px;font-size:9.12px;color:#ffd700;font-family:'Liberation Mono',monospace;font-weight:normal;-webkit-text-stroke:0.18px #ffd700">{</div><div class="t" style="left:343px;top:319.03px;height:20px;line-height:20px;font-size:9.12px;color:#6e7681;font-family:'Liberation Mono',monospace;font-weight:normal;width:30px;text-align:right">17</div><div class="t" style="left:404.14px;top:319.03px;height:20px;line-height:20px;font-size:9.12px;color:#9cdcfe;font-family:'Liberation Mono',monospace;font-weight:normal;-webkit-text-stroke:0.18px #9cdcfe">font—family</div><div class="t" style="left:464.31px;top:319.03px;height:20px;line-height:20px;font-size:9.12px;color:#cccccc;font-family:'Liberation Mono',monospace;font-weight:normal;-webkit-text-stroke:0.18px #cccccc">: </div><div class="t" style="left:475.25px;top:319.03px;height:20px;line-height:20px;font-size:9.12px;color:#dcdcaa;font-family:'Liberation Mono',monospace;font-weight:normal;-webkit-text-stroke:0.18px #dcdcaa">var</div><div class="t" style="left:491.66px;top:319.03px;height:20px;line-height:20px;font-size:9.12px;color:#da70d6;font-family:'Liberation Mono',monospace;font-weight:normal;-webkit-text-stroke:0.18px #da70d6">(</div><div class="t" style="left:497.13px;top:319.03px;height:20px;line-height:20px;font-size:9.12px;color:#9cdcfe;font-family:'Liberation Mono',monospace;font-weight:normal;-webkit-text-stroke:0.18px #9cdcfe">——font—styrene</div><div class="t" style="left:573.71px;top:319.03px;height:20px;line-height:20px;font-size:9.12px;color:#da70d6;font-family:'Liberation Mono',monospace;font-weight:normal;-webkit-text-stroke:0.18px #da70d6">)</div><div class="t" style="left:579.18px;top:319.03px;height:20px;line-height:20px;font-size:9.12px;color:#cccccc;font-family:'Liberation Mono',monospace;font-weight:normal;-webkit-text-stroke:0.18px #cccccc">;</div><div class="t" style="left:343px;top:332.65px;height:20px;line-height:20px;font-size:9.12px;color:#6e7681;font-family:'Liberation Mono',monospace;font-weight:normal;width:30px;text-align:right">18</div><div class="t" style="left:404.14px;top:332.65px;height:20px;line-height:20px;font-size:9.12px;color:#9cdcfe;font-family:'Liberation Mono',monospace;font-weight:normal;-webkit-text-stroke:0.18px #9cdcfe">color</div><div class="t" style="left:431.49px;top:332.65px;height:20px;line-height:20px;font-size:9.12px;color:#cccccc;font-family:'Liberation Mono',monospace;font-weight:normal;-webkit-text-stroke:0.18px #cccccc">: </div><div class="t" style="left:442.43px;top:332.65px;height:20px;line-height:20px;font-size:9.12px;color:#dcdcaa;font-family:'Liberation Mono',monospace;font-weight:normal;-webkit-text-stroke:0.18px #dcdcaa">var</div><div class="t" style="left:458.84px;top:332.65px;height:20px;line-height:20px;font-size:9.12px;color:#da70d6;font-family:'Liberation Mono',monospace;font-weight:normal;-webkit-text-stroke:0.18px #da70d6">(</div><div class="t" style="left:464.31px;top:332.65px;height:20px;line-height:20px;font-size:9.12px;color:#9cdcfe;font-family:'Liberation Mono',monospace;font-weight:normal;-webkit-text-stroke:0.18px #9cdcfe">——dark—bg</div><div class="t" style="left:513.54px;top:332.65px;height:20px;line-height:20px;font-size:9.12px;color:#da70d6;font-family:'Liberation Mono',monospace;font-weight:normal;-webkit-text-stroke:0.18px #da70d6">)</div><div class="t" style="left:519.01px;top:332.65px;height:20px;line-height:20px;font-size:9.12px;color:#cccccc;font-family:'Liberation Mono',monospace;font-weight:normal;-webkit-text-stroke:0.18px #cccccc">;</div><div class="t" style="left:343px;top:346.27px;height:20px;line-height:20px;font-size:9.12px;color:#6e7681;font-family:'Liberation Mono',monospace;font-weight:normal;width:30px;text-align:right">19</div><div class="t" style="left:404.14px;top:346.27px;height:20px;line-height:20px;font-size:9.12px;color:#9cdcfe;font-family:'Liberation Mono',monospace;font-weight:normal;-webkit-text-stroke:0.18px #9cdcfe">margin</div><div class="t" style="left:436.96px;top:346.27px;height:20px;line-height:20px;font-size:9.12px;color:#cccccc;font-family:'Liberation Mono',monospace;font-weight:normal;-webkit-text-stroke:0.18px #cccccc">: </div><div class="t" style="left:447.9px;top:346.27px;height:20px;line-height:20px;font-size:9.12px;color:#b5cea8;font-family:'Liberation Mono',monospace;font-weight:normal;-webkit-text-stroke:0.18px #b5cea8">0</div><div class="t" style="left:453.37px;top:346.27px;height:20px;line-height:20px;font-size:9.12px;color:#cccccc;font-family:'Liberation Mono',monospace;font-weight:normal;-webkit-text-stroke:0.18px #cccccc">;</div><div class="t" style="left:343px;top:359.89px;height:20px;line-height:20px;font-size:9.12px;color:#6e7681;font-family:'Liberation Mono',monospace;font-weight:normal;width:30px;text-align:right">20</div><div class="t" style="left:404.14px;top:359.89px;height:20px;line-height:20px;font-size:9.12px;color:#9cdcfe;font-family:'Liberation Mono',monospace;font-weight:normal;-webkit-text-stroke:0.18px #9cdcfe">background—color</div><div class="t" style="left:491.66px;top:359.89px;height:20px;line-height:20px;font-size:9.12px;color:#cccccc;font-family:'Liberation Mono',monospace;font-weight:normal;-webkit-text-stroke:0.18px #cccccc">: </div><div class="t" style="left:502.6px;top:359.89px;height:20px;line-height:20px;font-size:9.12px;color:#dcdcaa;font-family:'Liberation Mono',monospace;font-weight:normal;-webkit-text-stroke:0.18px #dcdcaa">var</div><div class="t" style="left:519.01px;top:359.89px;height:20px;line-height:20px;font-size:9.12px;color:#da70d6;font-family:'Liberation Mono',monospace;font-weight:normal;-webkit-text-stroke:0.18px #da70d6">(</div><div class="t" style="left:524.48px;top:359.89px;height:20px;line-height:20px;font-size:9.12px;color:#9cdcfe;font-family:'Liberation Mono',monospace;font-weight:normal;-webkit-text-stroke:0.18px #9cdcfe">——light—text</div><div class="t" style="left:590.12px;top:359.89px;height:20px;line-height:20px;font-size:9.12px;color:#da70d6;font-family:'Liberation Mono',monospace;font-weight:normal;-webkit-text-stroke:0.18px #da70d6">)</div><div class="t" style="left:595.59px;top:359.89px;height:20px;line-height:20px;font-size:9.12px;color:#cccccc;font-family:'Liberation Mono',monospace;font-weight:normal;-webkit-text-stroke:0.18px #cccccc">;</div><div class="t" style="left:343px;top:373.51px;height:20px;line-height:20px;font-size:9.12px;color:#6e7681;font-family:'Liberation Mono',monospace;font-weight:normal;width:30px;text-align:right">21</div><div class="t" style="left:404.14px;top:373.51px;height:20px;line-height:20px;font-size:9.12px;color:#9cdcfe;font-family:'Liberation Mono',monospace;font-weight:normal;-webkit-text-stroke:0.18px #9cdcfe">min—height</div><div class="t" style="left:458.84px;top:373.51px;height:20px;line-height:20px;font-size:9.12px;color:#cccccc;font-family:'Liberation Mono',monospace;font-weight:normal;-webkit-text-stroke:0.18px #cccccc">: </div><div class="t" style="left:469.78px;top:373.51px;height:20px;line-height:20px;font-size:9.12px;color:#b5cea8;font-family:'Liberation Mono',monospace;font-weight:normal;-webkit-text-stroke:0.18px #b5cea8">100vh</div><div class="t" style="left:497.13px;top:373.51px;height:20px;line-height:20px;font-size:9.12px;color:#cccccc;font-family:'Liberation Mono',monospace;font-weight:normal;-webkit-text-stroke:0.18px #cccccc">;</div><div class="t" style="left:343px;top:387.13px;height:20px;line-height:20px;font-size:9.12px;color:#6e7681;font-family:'Liberation Mono',monospace;font-weight:normal;width:30px;text-align:right">22</div><div class="t" style="left:393.2px;top:387.13px;height:20px;line-height:20px;font-size:9.12px;color:#ffd700;font-family:'Liberation Mono',monospace;font-weight:normal;-webkit-text-stroke:0.18px #ffd700">}</div><div class="t" style="left:343px;top:400.75px;height:20px;line-height:20px;font-size:9.12px;color:#6e7681;font-family:'Liberation Mono',monospace;font-weight:normal;width:30px;text-align:right">23</div><div class="t" style="left:343px;top:414.37px;height:20px;line-height:20px;font-size:9.12px;color:#6e7681;font-family:'Liberation Mono',monospace;font-weight:normal;width:30px;text-align:right">24</div><div class="t" style="left:393.2px;top:414.37px;height:20px;line-height:20px;font-size:9.12px;color:#6a9955;font-family:'Liberation Mono',monospace;font-weight:normal;-webkit-text-stroke:0.18px #6a9955">/* Menu Page Styles */</div><div class="t" style="left:343px;top:427.99px;height:20px;line-height:20px;font-size:9.12px;color:#6e7681;font-family:'Liberation Mono',monospace;font-weight:normal;width:30px;text-align:right">25</div><div class="t" style="left:393.2px;top:427.99px;height:20px;line-height:20px;font-size:9.12px;color:#d7ba7d;font-family:'Liberation Mono',monospace;font-weight:normal;-webkit-text-stroke:0.18px #d7ba7d">.menu—page</div><div class="t" style="left:447.9px;top:427.99px;height:20px;line-height:20px;font-size:9.12px;color:#cccccc;font-family:'Liberation Mono',monospace;font-weight:normal;-webkit-text-stroke:0.18px #cccccc">, </div><div class="t" style="left:458.84px;top:427.99px;height:20px;line-height:20px;font-size:9.12px;color:#d7ba7d;font-family:'Liberation Mono',monospace;font-weight:normal;-webkit-text-stroke:0.18px #d7ba7d">.confirmation—page</div><div class="t" style="left:562.77px;top:427.99px;height:20px;line-height:20px;font-size:9.12px;color:#ffd700;font-family:'Liberation Mono',monospace;font-weight:normal;-webkit-text-stroke:0.18px #ffd700">{</div><div class="r" style="left:641px;top:137px;width:1px;height:304px;background:#262626;"></div><div class="r" style="left:641px;top:103px;width:11px;height:34px;background:#434343;"></div><div class="r" style="left:641px;top:103px;width:11px;height:2px;background:#555555;"></div><div class="r" style="left:653px;top:59px;width:1px;height:382px;background:#2b2b2b;"></div><div class="r" style="left:654px;top:59px;width:305px;height:382px;background:#181818;"></div><div class="r" style="left:652.5px;top:59px;width:1.5px;height:2px;background:#0078d4;"></div><div class="t" style="left:665.6px;top:63.400000000000006px;height:20px;line-height:20px;font-size:10.77px;color:#d0d0d0;font-family:'Liberation Sans',sans-serif;font-weight:normal;-webkit-text-stroke:0.2px #d0d0d0">Unit Tests</div><svg style="left:721.8px;top:70.6px" width="8" height="6" viewBox="0 0 8 6"><path d="M0.7 1.2L4 4.6 7.3 1.2" fill="none" stroke="#cccccc" stroke-width="1"/></svg><div class="r" style="left:654px;top:86px;width:305px;height:1px;background:#2b2b2b;"></div><svg style="left:916.6px;top:67.6px" width="12" height="12" viewBox="0 0 12 12" fill="none" stroke="#c5c5c5" stroke-width="0.95"><path d="M1.3 8.4A5.2 5.2 0 1 1 4.02 10.69L0.7 11.1z"/><path d="M5.8 3.6v4.4M3.6 5.8h4.4" stroke-width="1.1"/></svg><svg style="left:938.8px;top:68.9px" width="10" height="10" viewBox="0 0 10 10"><path d="M0.6 0.6l8.6 8.6M9.2 0.6L0.6 9.2" stroke="#c5c5c5" stroke-width="0.95"/></svg><div class="r" style="left:664.8px;top:95.7px;width:155.1px;height:23.2px;background:#2d2d2d;border:1px solid #393939;border-radius:4px"></div><div class="t" style="left:672.5px;top:98px;height:20px;line-height:20px;font-size:10.51px;color:#d4d4d4;font-family:'Liberation Sans',sans-serif;font-weight:normal;-webkit-text-stroke:0.12px #d4d4d4">can you add tests for this file?</div><div class="t" style="left:666.7px;top:122.30000000000001px;height:20px;line-height:20px;font-size:9.01px;color:#727272;font-family:'Liberation Sans',sans-serif;font-weight:normal;">localizationUtils.ts</div><div class="r" style="left:667.2px;top:156px;width:1px;height:158px;background:#3a3a3a;"></div><div class="r" style="left:664.6px;top:153.3px;width:6px;height:6px;background:#8a8a8a;border-radius:50%"></div><div class="t" style="left:676.9px;top:145.5px;height:20px;line-height:20px;font-size:10.4px;color:#d0d0d0;font-family:'Liberation Sans',sans-serif;font-weight:normal;">Sure, let me take a look at the file:</div><div class="r" style="left:664.6px;top:178.0px;width:6px;height:6px;background:#73c991;border-radius:50%"></div><div class="t" style="left:676.9px;top:171.6px;height:20px;line-height:20px;font-size:9.94px;color:#e6e6e6;font-family:'Liberation Sans',sans-serif;font-weight:bold;">Read</div><div class="t" style="left:708.9px;top:173.6px;height:20px;line-height:20px;font-size:8.25px;color:#d4d4d4;font-family:'Liberation Mono',monospace;font-weight:normal;">localizationUtils.ts</div><svg style="left:678px;top:192.3px" width="6" height="7" viewBox="0 0 6 7"><path d="M0.9 0.3v5.6h4" fill="none" stroke="#707070" stroke-width="0.9"/></svg><div class="t" style="left:688.6px;top:185.5px;height:20px;line-height:20px;font-size:9.37px;color:#8c8c8c;font-family:'Liberation Sans',sans-serif;font-weight:normal;">Read 256 lines</div><div class="r" style="left:664.6px;top:215.6px;width:6px;height:6px;background:#73c991;border-radius:50%"></div><div class="t" style="left:676.9px;top:208.8px;height:20px;line-height:20px;font-size:10.44px;color:#e6e6e6;font-family:'Liberation Sans',sans-serif;font-weight:bold;">Write</div><div class="t" style="left:710.2px;top:209.2px;height:20px;line-height:20px;font-size:9.8px;color:#d4d4d4;font-family:'Liberation Mono',monospace;font-weight:normal;">(src/test/localization.ts)</div><div class="r" style="left:676px;top:228.7px;width:264px;height:74.7px;border:1px solid #333333;border-radius:3px;background:#1c1c1c;overflow:hidden"><div class="t" style="left:3.2px;top:-0.7px;height:20px;line-height:20px;font-size:9.4px;color:#8a8a8a;font-family:'Liberation Sans',sans-serif">1</div><div class="r" style="left:24.9px;top:2.8px;width:272.7px;height:9.4px;background:#6fc08a"></div><div class="t" style="left:25.5px;top:-1.4000000000000004px;height:20px;line-height:20px;font-size:8.42px;color:#1e2b22;font-family:'Liberation Mono',monospace">import { formatDate, translateKey, getCurrencySymbol }</div><div class="t" style="left:3.2px;top:15.5px;height:20px;line-height:20px;font-size:9.4px;color:#8a8a8a;font-family:'Liberation Sans',sans-serif">2</div><div class="t" style="left:3.2px;top:31.2px;height:20px;line-height:20px;font-size:9.4px;color:#8a8a8a;font-family:'Liberation Sans',sans-serif">3</div><div class="r" style="left:24.9px;top:34.699999999999996px;width:181.79999999999998px;height:9.4px;background:#6fc08a"></div><div class="t" style="left:25.5px;top:30.5px;height:20px;line-height:20px;font-size:8.42px;color:#1e2b22;font-family:'Liberation Mono',monospace">describe(&#x27;LocalizationUtil&#x27;, () =&gt; {</div><div class="t" style="left:3.2px;top:47.4px;height:20px;line-height:20px;font-size:9.4px;color:#8a8a8a;font-family:'Liberation Sans',sans-serif">4</div><div class="r" style="left:24.9px;top:50.9px;width:161.6px;height:9.4px;background:#6fc08a"></div><div class="t" style="left:25.5px;top:46.7px;height:20px;line-height:20px;font-size:8.42px;color:#1e2b22;font-family:'Liberation Mono',monospace">  describe(&#x27;formatDate&#x27;, () =&gt; {</div><div class="t" style="left:3.2px;top:62.8px;height:20px;line-height:20px;font-size:9.4px;color:#8a8a8a;font-family:'Liberation Sans',sans-serif">5</div><div class="r" style="left:24.9px;top:66.3px;width:232.29999999999998px;height:9.4px;background:#6fc08a"></div><div class="t" style="left:25.5px;top:62.1px;height:20px;line-height:20px;font-size:8.42px;color:#1e2b22;font-family:'Liberation Mono',monospace">    it(&#x27;should format date correctly&#x27;, () =&gt; {</div></div><svg style="left:662.7px;top:316px" width="11" height="11" viewBox="0 0 22 22" fill="#d98a6a"><ellipse cx="11" cy="5.4" rx="2.3" ry="4.1" transform="rotate(0 11 11)"/><ellipse cx="11" cy="5.4" rx="2.3" ry="4.1" transform="rotate(60 11 11)"/><ellipse cx="11" cy="5.4" rx="2.3" ry="4.1" transform="rotate(120 11 11)"/><ellipse cx="11" cy="5.4" rx="2.3" ry="4.1" transform="rotate(180 11 11)"/><ellipse cx="11" cy="5.4" rx="2.3" ry="4.1" transform="rotate(240 11 11)"/><ellipse cx="11" cy="5.4" rx="2.3" ry="4.1" transform="rotate(300 11 11)"/></svg><div class="t" style="left:676.9px;top:312.2px;height:20px;line-height:20px;font-size:10.6px;color:#e2e2e2;font-family:'Liberation Sans',sans-serif;font-weight:normal;-webkit-text-stroke:0.1px #e2e2e2">Pondering...</div><div class="r" style="left:664.6px;top:378.7px;width:290.4px;height:56.2px;background:#2d2d2d;border:1px solid #383838;border-radius:5px"></div><div class="r" style="left:665px;top:409px;width:289.6px;height:1px;background:#3d3d3d;"></div><div class="r" style="left:675.3px;top:387.6px;width:1px;height:12.4px;background:#cccccc;"></div><div class="t" style="left:677.6px;top:384.3px;height:20px;line-height:20px;font-size:10.48px;color:#7a7a7a;font-family:'Liberation Sans',sans-serif;font-weight:normal;">Queue another message...</div><svg style="left:672px;top:418.5px" width="6" height="8" viewBox="0 0 6 8" fill="none" stroke="#bdbdbd" stroke-width="0.9"><path d="M4.3 0.6l1.2 1.2-3.6 5-1.6 0.6 0.3-1.7z"/></svg><div class="t" style="left:679.8px;top:412.1px;height:20px;line-height:20px;font-size:9.14px;color:#d0d0d0;font-family:'Liberation Sans',sans-serif;font-weight:normal;-webkit-text-stroke:0.1px #d0d0d0">Ask before editing</div><svg style="left:761.5px;top:418px" width="7" height="9" viewBox="0 0 7 9" fill="none" stroke="#bdbdbd" stroke-width="0.9"><path d="M5.6 4.2L3.2 7.6a1.5 1.5 0 0 1-2.4-1.7l2.9-4.3a1 1 0 0 1 1.6 1.1L2.8 6"/></svg><div class="t" style="left:771.7px;top:412.1px;height:20px;line-height:20px;font-size:9.25px;color:#d0d0d0;font-family:'Liberation Sans',sans-serif;font-weight:normal;-webkit-text-stroke:0.1px #d0d0d0">localizationUtils.ts</div><svg style="left:916.5px;top:418px" width="4" height="9" viewBox="0 0 4 9"><path d="M3.2 0.5L0.8 8.5" stroke="#bdbdbd" stroke-width="1"/></svg><div class="r" style="left:933.9px;top:413.5px;width:16.9px;height:16.6px;background:#676767;border-radius:3px"></div><div class="r" style="left:938.6px;top:418px;width:7.6px;height:7.6px;background:#555555;border:1.3px solid #f4f4f4;border-radius:1.8px"></div><div class="r" style="left:121px;top:59px;width:838px;height:1px;background:#2b2b2b;"></div><div class="r" style="left:121px;top:441px;width:838px;height:17px;background:#181818;"></div><div class="r" style="left:121px;top:441px;width:838px;height:1px;background:#2b2b2b;"></div><div class="r" style="left:121px;top:441px;width:25.2px;height:17px;background:#0078d4;"></div><svg style="left:129px;top:445px" width="9" height="10" viewBox="0 0 9 10" fill="none" stroke="#ffffff" stroke-width="0.95"><path d="M0.7 3.8L3.8 6 0.7 8.4M7.5 0.7L4.5 3.2 7.5 5.6"/></svg><svg style="left:152.5px;top:444px" width="10" height="11" viewBox="0 0 10 11" fill="none" stroke="#cccccc" stroke-width="0.9"><circle cx="2.2" cy="1.8" r="1.3"/><circle cx="2.2" cy="9.2" r="1.3"/><circle cx="8" cy="3.4" r="1.3"/><path d="M2.2 3.1v4.8M8 4.7c0 2.6-5.8 1.6-5.8 3.2"/></svg><div class="t" style="left:165.6px;top:439.6px;height:20px;line-height:20px;font-size:9.54px;color:#cccccc;font-family:'Liberation Sans',sans-serif;font-weight:normal;">main*</div><svg style="left:195px;top:446px" width="10" height="7.5" viewBox="0 0 11 8" fill="none" stroke="#cccccc" stroke-width="0.95"><path d="M3.4 6.6H2.4A2 2 0 0 1 2.6 2.8 3 3 0 0 1 8.4 2.4 2.1 2.1 0 0 1 8.6 6.6H7.6M5.5 7.8V3.8M4 5.2l1.5-1.5L7 5.2"/></svg><svg style="left:217.5px;top:444.3px" width="11" height="11" viewBox="0 0 11 11" fill="none" stroke="#cccccc" stroke-width="0.9"><circle cx="5.1" cy="5.1" r="4.4"/><path d="M3.3 3.3l3.6 3.6M6.9 3.3L3.3 6.9"/></svg><div class="t" style="left:230.6px;top:439.6px;height:20px;line-height:20px;font-size:9.54px;color:#cccccc;font-family:'Liberation Sans',sans-serif;font-weight:normal;">0</div><svg style="left:239.2px;top:444.3px" width="10" height="10" viewBox="0 0 10 10" fill="none" stroke="#cccccc" stroke-width="0.9"><path d="M5 0.8L9.4 9H0.6z"/><path d="M5 3.8v2.8M5 7.4v0.9"/></svg><div class="t" style="left:251.8px;top:439.6px;height:20px;line-height:20px;font-size:9.54px;color:#cccccc;font-family:'Liberation Sans',sans-serif;font-weight:normal;">0</div><svg style="left:914.8px;top:444px" width="12" height="11" viewBox="0 0 24 22"><path d="M6 1.5C3 1.5 1.8 3.6 2.4 7 1 8 0.6 9.6 0.6 12v3.4C0.6 19.5 6 21.2 12 21.2S23.4 19.5 23.4 15.4V12c0-2.4-0.4-4-1.8-5 0.6-3.4-0.6-5.5-3.6-5.5-2.4 0-4.2 1-6 2.6-1.8-1.6-3.6-2.6-6-2.6z" fill="#cccccc"/><ellipse cx="7.2" cy="7" rx="3.4" ry="3.2" fill="#181818"/><ellipse cx="16.8" cy="7" rx="3.4" ry="3.2" fill="#181818"/><path d="M4 12.6h16v4.8c-2 1.4-5 1.8-8 1.8s-6-0.4-8-1.8z" fill="#181818"/><rect x="8.6" y="13.8" width="1.8" height="3.4" fill="#cccccc"/><rect x="13.6" y="13.8" width="1.8" height="3.4" fill="#cccccc"/><circle cx="8" cy="7.4" r="1.2" fill="#cccccc"/><circle cx="16" cy="7.4" r="1.2" fill="#cccccc"/></svg><svg style="left:938.5px;top:444px" width="10" height="10.5" viewBox="0 0 20 21" fill="none" stroke="#c8c8c8" stroke-width="1.5" stroke-linejoin="round"><path d="M4.6 15.6V9.4C4.6 6 6.8 3.2 10 3.2s5.4 2.8 5.4 6.2v6.2l1.8 1.8H2.8z"/><path d="M8 18.6c0.4 1 1.2 1.6 2 1.6s1.6-0.6 2-1.6"/><path d="M1.4 20L18.6 1"/></svg></div></div></body></html>
